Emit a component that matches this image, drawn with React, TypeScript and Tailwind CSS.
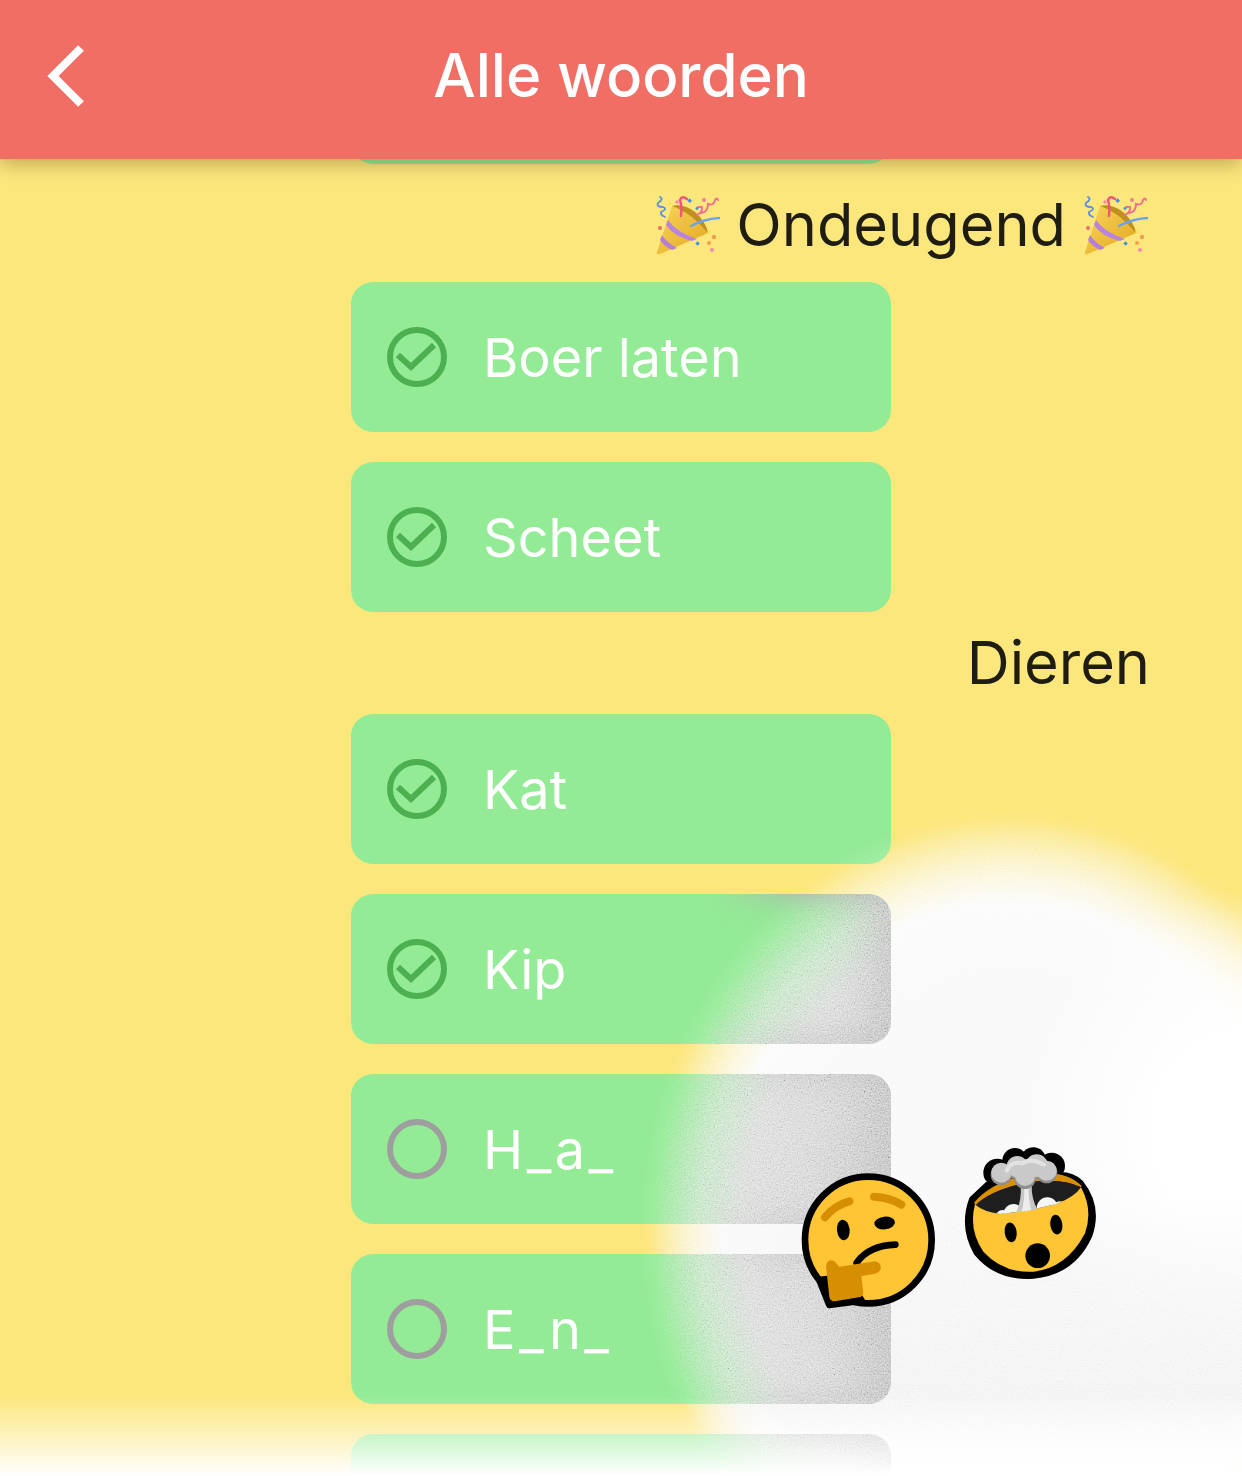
const Party = () => (
  <svg viewBox="0 0 70 70" className="w-[70px] h-[70px] shrink-0">
    <defs>
      <linearGradient id="cone" x1="0" y1="0" x2="1" y2="1">
        <stop offset="0" stopColor="#f8d65c" />
        <stop offset="1" stopColor="#e3a61f" />
      </linearGradient>
    </defs>
    <path d="M5 62 Q4 65 8 64 L56 43 Q54 32 43 22 Q31 13 20 16 Z" fill="url(#cone)" />
    <path d="M20 16 Q31 13 43 22 Q54 32 56 43 Q49 35 40 27 Q29 19 20 16 Z" fill="#c08f22" />
    <path d="M16 30 Q24 42 45 49 L40 51 Q21 46 14 35 Z" fill="#b985dc" />
    <path d="M10 45 Q14 52 25 58 L20 60 Q12 56 8 50 Z" fill="#b57fd8" />
    <path d="M8 7 Q12 9 6 13 Q4 17 11 17 Q16 19 9 22 Q8 25 13 27" fill="none" stroke="#5b8fe0" strokeWidth="1.8" strokeLinecap="round" />
    <path d="M29 26 Q30 16 28 10 Q30 5 35 9" fill="none" stroke="#f0567a" strokeWidth="2.4" strokeLinecap="round" />
    <path d="M45 25 Q51 22 50 17 L46 17 M49 23 Q56 22 56 14 Q62 16 63 10 Q65 7 66 10" fill="none" stroke="#f0708f" strokeWidth="2" strokeLinecap="round" />
    <path d="M39 36 Q52 29 67 28" fill="none" stroke="#6ba4ec" strokeWidth="2.4" strokeLinecap="round" />
    <circle cx="18" cy="14" r="1.6" fill="#f7e25a" />
    <circle cx="25" cy="12" r="1.8" fill="#f28ab0" />
    <rect x="36" y="9" width="3.4" height="3.4" fill="#4a90e2" transform="rotate(45 37.7 10.7)" />
    <rect x="44" y="17" width="2.6" height="2.6" fill="#4a90e2" transform="rotate(45 45 18)" />
    <circle cx="52" cy="10" r="1.9" fill="#f07a9a" />
    <circle cx="8" cy="38" r="2" fill="#ef6c6c" />
    <circle cx="57" cy="42" r="1.6" fill="#f7e25a" />
    <circle cx="62" cy="47" r="2.2" fill="#f0a04a" />
    <circle cx="57" cy="53" r="2" fill="#f0a04a" />
    <rect x="44" y="52" width="3.2" height="3.2" fill="#4a90e2" transform="rotate(45 45.6 53.6)" />
    <circle cx="60" cy="60" r="2" fill="#f28ab0" />
  </svg>
);

const Thinking = () => (
  <svg viewBox="0 0 1020 600" className="absolute left-[780px] top-[1130px] w-[340px] h-[200px] z-40">
    <circle cx="265" cy="330" r="190" fill="#ffc535" stroke="#000" strokeWidth="20" />
    <path d="M118 450 L148 525 L245 512 L200 440 Z" fill="#000" stroke="#000" strokeWidth="20" strokeLinejoin="round" />
    <path d="M135 262 Q165 225 208 214" fill="none" stroke="#d68f00" strokeWidth="24" strokeLinecap="round" />
    <path d="M282 200 Q330 202 364 224" fill="none" stroke="#d68f00" strokeWidth="24" strokeLinecap="round" />
    <ellipse cx="190" cy="300" rx="19" ry="31" fill="#000" transform="rotate(-6 190 300)" />
    <ellipse cx="314" cy="279" rx="31" ry="19" fill="#000" transform="rotate(-6 314 279)" />
    <path d="M230 398 Q268 346 346 344" fill="none" stroke="#000" strokeWidth="20" strokeLinecap="round" />
    <path d="M138 408 Q142 386 162 392 L178 410 L285 394 Q305 398 302 416 Q298 430 280 432 L244 438 L250 488 Q248 500 236 502 L165 514 Q150 514 148 500 Z" fill="#d68f00" />
  </svg>
);

const MindBlown = () => (
  <svg viewBox="0 0 1020 600" className="absolute left-[780px] top-[1130px] w-[340px] h-[200px] z-40">
    <defs>
      <clipPath id="hole">
        <path d="M587 225 Q640 175 760 155 Q850 145 903 172 Q885 200 830 222 Q740 245 660 252 Q610 245 587 225 Z" />
      </clipPath>
    </defs>
    <path d="M572 205 Q540 290 585 370 Q650 450 760 442 Q880 432 932 320 Q965 230 905 155 Q880 130 840 130 L620 160 Z" fill="#000" stroke="#000" strokeWidth="8" strokeLinejoin="round" />
    <g fill="#000">
      <circle cx="652" cy="128" r="42" />
      <circle cx="705" cy="92" r="38" />
      <circle cx="760" cy="90" r="38" />
      <circle cx="815" cy="108" r="40" />
      <rect x="640" y="100" width="190" height="70" />
    </g>
    <path d="M585 222 Q565 300 610 365 Q670 430 760 425 Q860 415 915 310 Q940 240 903 172 Z" fill="#ffc535" />
    <path d="M582 218 Q640 150 760 132 Q860 120 905 168 L903 172 Q850 145 760 155 Q640 175 587 225 Z" fill="#d98f00" />
    <path d="M587 225 Q640 175 760 155 Q850 145 903 172 Q885 200 830 222 Q740 245 660 252 Q610 245 587 225 Z" fill="#1e1e1e" />
    <g clipPath="url(#hole)" fill="#f6f6f6">
      <circle cx="700" cy="252" r="30" />
      <circle cx="668" cy="262" r="22" />
      <circle cx="738" cy="254" r="22" />
      <circle cx="802" cy="234" r="32" />
      <circle cx="840" cy="236" r="22" />
    </g>
    <path d="M722 165 Q726 210 708 248 L772 238 Q754 205 755 165 Z" fill="#c6c6c6" />
    <path d="M732 165 Q736 210 724 245 L754 240 Q744 205 746 165 Z" fill="#ececec" />
    <g fill="#8f8f8f">
      <circle cx="664" cy="134" r="32" />
      <circle cx="712" cy="115" r="34" />
      <circle cx="770" cy="112" r="36" />
      <circle cx="800" cy="128" r="32" />
      <circle cx="735" cy="145" r="32" />
    </g>
    <g fill="#c9c9c9">
      <circle cx="664" cy="128" r="30" />
      <circle cx="712" cy="110" r="32" />
      <circle cx="770" cy="107" r="34" />
      <circle cx="800" cy="122" r="30" />
      <circle cx="735" cy="138" r="30" />
    </g>
    <path d="M680 122 Q692 92 728 100 Q750 82 792 104" fill="none" stroke="#e2e2e2" strokeWidth="12" strokeLinecap="round" />
    <ellipse cx="692" cy="307" rx="18" ry="30" fill="#000" transform="rotate(-8 692 307)" />
    <ellipse cx="829" cy="284" rx="18" ry="30" fill="#000" transform="rotate(-8 829 284)" />
    <circle cx="773" cy="377" r="37" fill="#000" />
  </svg>
);

const Check = ({ done }: { done: boolean }) => (
  <svg viewBox="0 0 60 60" className="w-[60px] h-[60px] shrink-0">
    <circle cx="30" cy="30" r="27" fill="none" stroke={done ? "#4caf50" : "#9e9e9e"} strokeWidth="6" />
    {done && <path d="M11 28 L24 40 L47 18" fill="none" stroke="#4caf50" strokeWidth="6" />}
  </svg>
);

const WordCard = ({ word, done = true, shaded = false, blanks = false }: { word?: string; done?: boolean; shaded?: boolean; blanks?: boolean }) => (
  <div className="relative w-[540px] h-[150px] shrink-0 rounded-[22px] bg-[#94eb96] overflow-hidden">
    <div className="absolute inset-0 bg-fixed bg-no-repeat bg-[radial-gradient(ellipse_370px_420px_at_1010px_1230px,#b8b8b8_30%,#cbcbcb_60%,#d0d0d0_72%,rgba(208,208,208,0)_96%)]" />
    {shaded && (
      <div className="absolute inset-0 rounded-[22px] shadow-[inset_-30px_0_50px_-10px_#aeaeae,inset_0_0_26px_#b6b6b6] [mask-image:linear-gradient(to_right,transparent_66%,#000_84%)]" />
    )}
    {word && (
      <div className="relative flex items-center h-full pl-9 gap-9">
        <Check done={done} />
        <span className={`text-white text-[54px] leading-none pt-[2px] ${blanks ? "tracking-[3.5px]" : ""}`}>{word}</span>
      </div>
    )}
  </div>
);

const Title = ({ children, height }: { children: React.ReactNode; height: string }) => (
  <div className={`flex items-center justify-end pr-[92px] text-[#1f1d12] text-[59.5px] leading-none gap-[14px] ${height}`}>
    {children}
  </div>
);

export default function App() {
  return (
    <div
      className="relative w-[1242px] h-[1476px] overflow-hidden bg-[#fce77d]"
      style={{ fontFamily: "Inter, 'Noto Sans', sans-serif" }}
    >
      {/* white blob behind the list */}
      <div className="absolute inset-0 bg-no-repeat bg-[radial-gradient(ellipse_360px_410px_at_1010px_1230px,#f7f7f7_60%,#fafafa_80%,rgba(252,252,252,0)_100%)]" />
      <div className="absolute inset-0 bg-no-repeat bg-[radial-gradient(ellipse_220px_240px_at_1240px_1130px,#ffffff_40%,rgba(255,255,255,0)_100%)]" />
      <div className="absolute inset-x-0 top-[1200px] h-[276px] bg-gradient-to-b from-transparent via-[#efefef] via-70% to-white [mask-image:radial-gradient(ellipse_360px_410px_at_1010px_30px,#000_80%,transparent_100%)]" />

      <div className="relative z-10 flex flex-col pt-[14px]">
        <div className="flex flex-col items-center">
          <WordCard />
        </div>
        <Title height="h-[118px] pt-[4px]">
          <Party />
          <span>Ondeugend</span>
          <Party />
        </Title>
        <div className="flex flex-col items-center gap-[30px]">
          <WordCard word="Boer laten" />
          <WordCard word="Scheet" />
        </div>
        <Title height="h-[102px]">
          <span>Dieren</span>
        </Title>
        <div className="flex flex-col items-center gap-[30px]">
          <WordCard word="Kat" />
          <WordCard word="Kip" shaded />
          <WordCard word="H_a_" done={false} shaded blanks />
          <WordCard word="E_n_" done={false} shaded blanks />
          <WordCard shaded />
        </div>
      </div>

      {/* grain on the blob */}
      <svg className="absolute inset-0 w-full h-full z-20 mix-blend-overlay opacity-70 [mask-image:radial-gradient(ellipse_370px_420px_at_1010px_1230px,#000_84%,transparent_100%)]">
        <filter id="grain">
          <feTurbulence type="fractalNoise" baseFrequency="0.7" numOctaves="2" seed="4" />
          <feColorMatrix values="0.33 0.33 0.33 0 0 0.33 0.33 0.33 0 0 0.33 0.33 0.33 0 0 0 0 0 0 1" />
          <feComponentTransfer>
            <feFuncR type="linear" slope="2" intercept="-0.45" />
            <feFuncG type="linear" slope="2" intercept="-0.45" />
            <feFuncB type="linear" slope="2" intercept="-0.45" />
          </feComponentTransfer>
        </filter>
        <rect width="100%" height="100%" filter="url(#grain)" />
      </svg>

      {/* bottom fade */}
      <div className="absolute inset-x-0 bottom-0 h-[80px] z-30 bg-gradient-to-b from-transparent to-white" />

      <Thinking />
      <MindBlown />

      <header className="absolute inset-x-0 top-0 h-[159px] z-50 flex items-center justify-center bg-[#f16e64] shadow-[0_6px_18px_rgba(60,40,0,0.3)]">
        <svg viewBox="0 0 40 64" className="absolute left-[46px] top-[44px] w-[40px] h-[64px]">
          <path d="M35 4 L7 32 L35 60" fill="none" stroke="#fff" strokeWidth="8" />
        </svg>
        <h1 className="text-white text-[60px] font-medium leading-none pb-[10px]">Alle woorden</h1>
      </header>
    </div>
  );
}
